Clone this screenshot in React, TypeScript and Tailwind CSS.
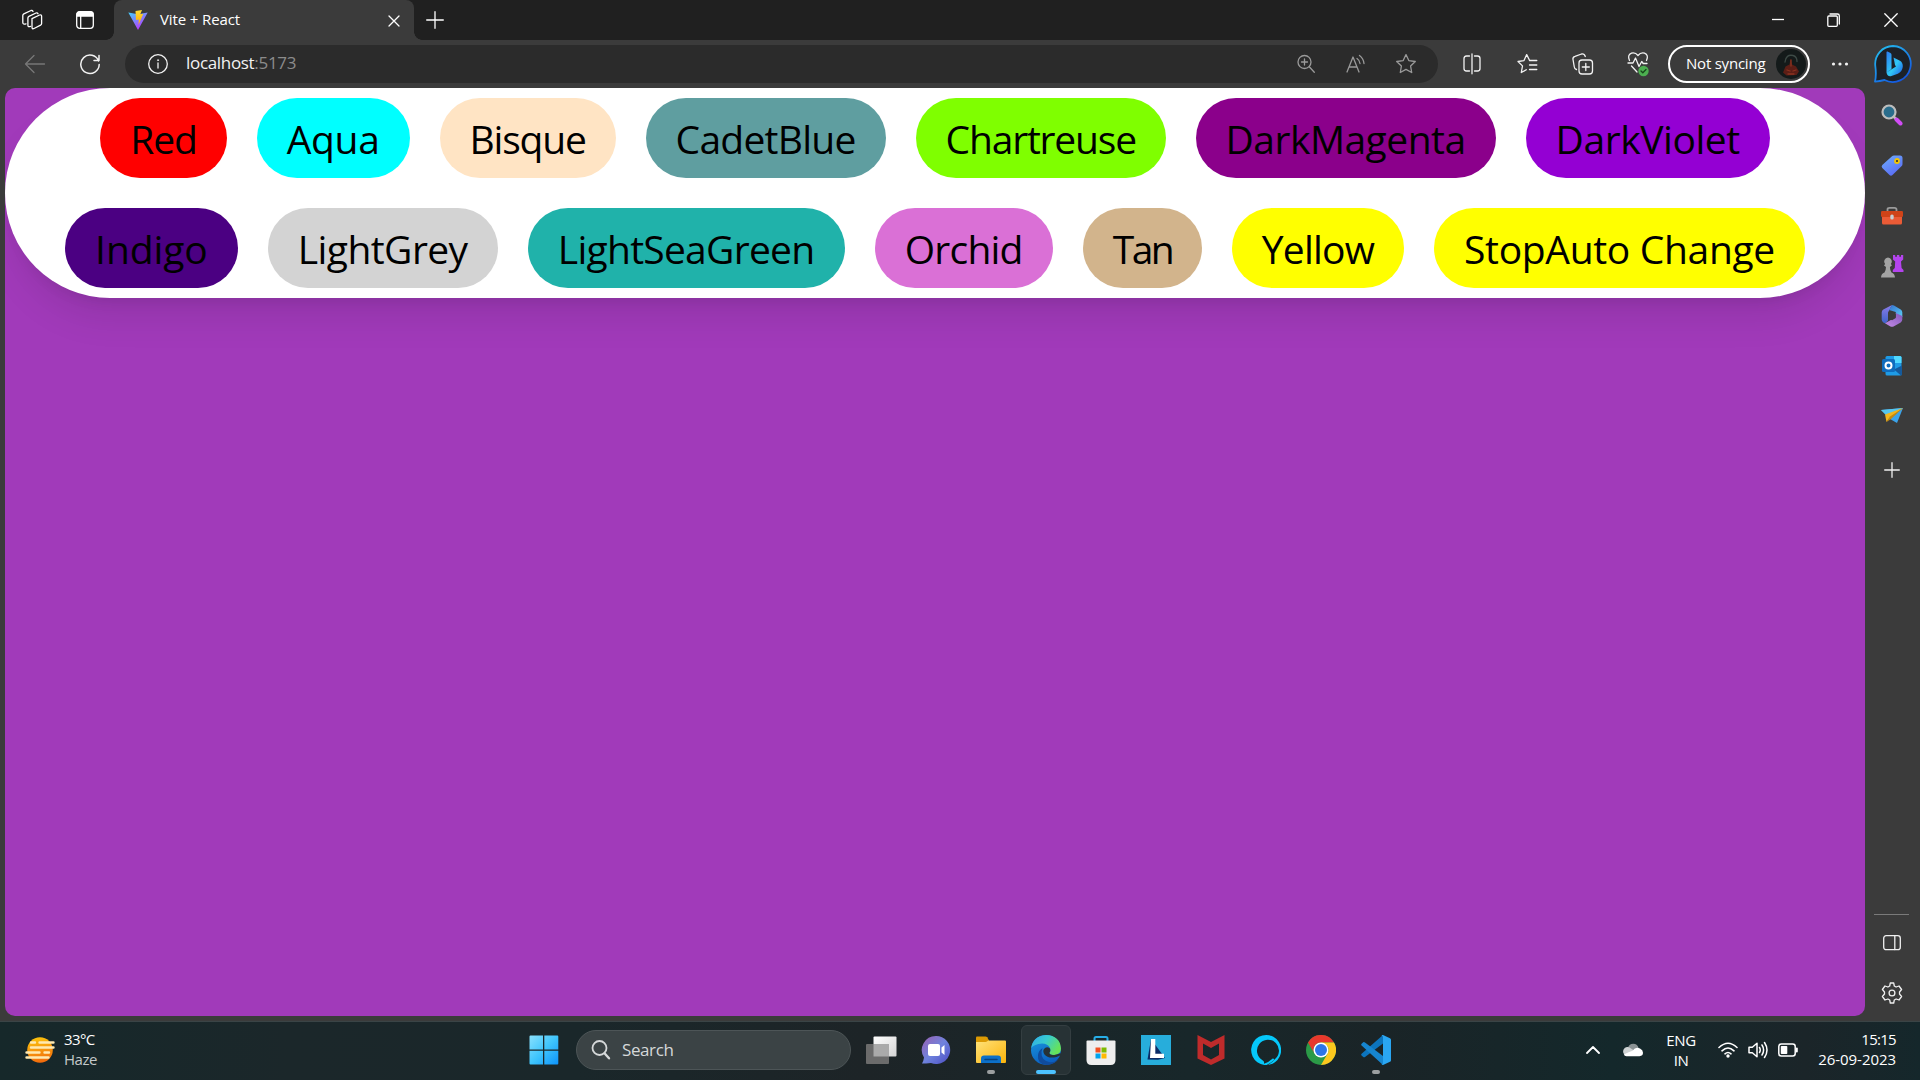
import React from "react";

type Swatch = { name: string; className: string };

const swatches: Swatch[] = [
  { name: "Red", className: "w-[126.6px] bg-[red] tracking-[-1.13px]" },
  { name: "Aqua", className: "w-[152.8px] bg-[aqua] tracking-[-0.35px]" },
  { name: "Bisque", className: "w-[176px] bg-[bisque] tracking-[-1.2px]" },
  { name: "CadetBlue", className: "w-[240px] bg-[cadetblue] tracking-[-0.75px]" },
  { name: "Chartreuse", className: "w-[250px] bg-[chartreuse] tracking-[-1.2px]" },
  { name: "DarkMagenta", className: "w-[300px] bg-[darkmagenta] tracking-[-0.52px]" },
  { name: "DarkViolet", className: "w-[244.2px] bg-[darkviolet] tracking-[-0.45px]" },
  { name: "Indigo", className: "w-[172.7px] bg-[indigo] tracking-[-0.08px]" },
  { name: "LightGrey", className: "w-[230px] bg-[lightgrey] tracking-[-0.57px]" },
  { name: "LightSeaGreen", className: "w-[317px] bg-[lightseagreen] tracking-[-0.73px]" },
  { name: "Orchid", className: "w-[178px] bg-[orchid] tracking-[-0.77px]" },
  { name: "Tan", className: "w-[119.1px] bg-[tan] tracking-[-2.6px]" },
  { name: "Yellow", className: "w-[172.2px] bg-[yellow] tracking-[-0.8px]" },
  { name: "StopAuto Change", className: "w-[370.9px] bg-[yellow] tracking-[-0.33px]" },
];

function Slot({ className = "", children }: { className?: string; children: React.ReactNode }) {
  return <div className={`flex shrink-0 items-center justify-center ${className}`}>{children}</div>;
}

function Svg({ w, h, box, children, className = "" }: { w: number; h: number; box?: string; children: React.ReactNode; className?: string }) {
  return (
    <svg
      width={w}
      height={h}
      viewBox={box ?? `0 0 ${w} ${h}`}
      fill="none"
      stroke="currentColor"
      strokeWidth="1.3"
      strokeLinecap="round"
      strokeLinejoin="round"
      className={`block shrink-0 ${className}`}
    >
      {children}
    </svg>
  );
}

function TabStrip() {
  return (
    <header className="flex h-10 bg-[#202020] text-white">
      <Slot className="w-[64px]">
        <Svg w={22} h={22}>
          <path d="M11 9.600 18.600 6q2-.7 2 1.200v7.200q0 1.200-1 1.700l-6.600 3.400q-2 .8-2-1.200z" />
          <path d="M9.500 17.400q-2.600 1-2.600-1.200V9q0-1.200 1-1.700L15 4q1.500-.5 2 .8" />
          <path d="M5 14.800q-3.200 1-3.200-1.200V6.600q0-1.200 1-1.700L10 1.500q1.500-.4 2 .9" />
        </Svg>
      </Slot>
      <Slot className="ml-[11px] w-5">
        <Svg w={20} h={20}>
          <rect x="1.700" y="1.700" width="16.600" height="16.600" rx="3" />
          <path d="M2 6V4.500Q2 2 4.500 2h11Q18 2 18 4.500V6z" fill="currentColor" />
          <path d="M5.700 6v12" />
        </Svg>
      </Slot>
      <div className="relative ml-[19px] flex h-10 w-[300px] items-center rounded-t-lg bg-[#3b3b3b]">
        <Svg w={20} h={20} className="ml-[14px]">
          <defs>
            <linearGradient id="viteBody" x1="0" y1="0" x2=".6" y2="1">
              <stop offset="0" stopColor="#41d1ff" />
              <stop offset="1" stopColor="#bd34fe" />
            </linearGradient>
            <linearGradient id="viteBolt" x1="0" y1="0" x2="0" y2="1">
              <stop offset="0" stopColor="#ffdd35" />
              <stop offset="1" stopColor="#ffa800" />
            </linearGradient>
          </defs>
          <path d="M.3 2.400 10 20 19.700 2.400 10 4.200z" fill="url(#viteBody)" stroke="none" />
          <path d="M7.500.9 14 0l-1.700 4.200 3-.5-4.800 11.200.3-5.400-2.800.6z" fill="url(#viteBolt)" stroke="none" />
        </Svg>
        <span className="mb-[2px] ml-3 whitespace-nowrap text-[15px] leading-5 tracking-[-0.12px]">Vite + React</span>
        <Svg w={12} h={12} className="mt-px ml-auto mr-[14px]">
          <path d="M1 1l10 10M11 1 1 11" />
        </Svg>
        <span className="absolute -left-2 bottom-0 size-2 bg-[radial-gradient(circle_at_0_0,#202020_7.5px,#3b3b3b_8px)]" />
        <span className="absolute -right-2 bottom-0 size-2 bg-[radial-gradient(circle_at_100%_0,#202020_7.5px,#3b3b3b_8px)]" />
      </div>
      <Slot className="ml-3 w-[18px]">
        <Svg w={18} h={18}>
          <path d="M9 .7v16.600M.7 9h16.600" />
        </Svg>
      </Slot>
      <div className="ml-auto flex">
        <Slot className="w-[57px]">
          <Svg w={12} h={12}><path d="M0 5.500h12" strokeLinecap="butt" /></Svg>
        </Slot>
        <Slot className="w-14">
          <Svg w={14} h={14}>
            <rect x=".8" y="3" width="9.500" height="10.300" rx="1" />
            <path d="M3 1h7.500q1.800 0 1.800 1.800V11" />
          </Svg>
        </Slot>
        <Slot className="w-[58px]">
          <Svg w={14} h={14}><path d="M.8.8l12.400 12.400M13.200.8.8 13.200" /></Svg>
        </Slot>
      </div>
    </header>
  );
}

function AddressBar() {
  return (
    <div className="flex h-[38px] w-[1313px] shrink-0 items-center rounded-full bg-[#2b2b2b]">
      <Svg w={22} h={22} className="ml-[22px]">
        <circle cx="11" cy="11" r="9.300" />
        <path d="M11 10v5" />
        <circle cx="11" cy="7.200" r=".6" fill="currentColor" strokeWidth=".6" />
      </Svg>
      <span className="mb-px ml-[17px] whitespace-nowrap text-[17px] leading-6 tracking-[-0.32px]">
        localhost<span className="text-[#8b8b8b]">:5173</span>
      </span>
      <div className="ml-auto mr-[7px] flex text-[#9a9a9a]">
        <Slot className="w-[50px]">
          <Svg w={20} h={20}>
            <circle cx="8.500" cy="8" r="6.500" />
            <path d="M8.500 5v6M5.500 8h6M13.300 12.800l5 5.500" />
          </Svg>
        </Slot>
        <Slot className="w-[50px]">
          <Svg w={22} h={20}>
            <path d="M2 18 8 3l6 15M4.200 13h7.600M12 4.500q2.500 1.600 3 5M14.500 1.500q4 3 4.500 8" />
          </Svg>
        </Slot>
        <Slot className="w-[50px]">
          <Svg w={22} h={22}>
            <path d="M11 1.600l2.800 6 6.500.9-4.700 4.500 1.100 6.500-5.700-3.100-5.700 3.100 1.100-6.500L1.700 8.500l6.500-.9z" />
          </Svg>
        </Slot>
      </div>
    </div>
  );
}

function Toolbar() {
  return (
    <div className="flex h-12 items-center bg-[#3b3b3b] pb-px text-[#f2f2f2]">
      <Slot className="ml-6 w-[22px] text-[#777]">
        <Svg w={22} h={20}><path d="M20.500 10h-19M10 1.500 1.500 10l8.500 8.500" /></Svg>
      </Slot>
      <Slot className="ml-[33px] w-[22px]">
        <Svg w={22} h={22} className="[stroke-width:1.5]">
          <path d="M19.600 8A9.200 9.200 0 1 0 20.200 11.500M20 2.500V7.600h-5" />
        </Svg>
      </Slot>
      <div className="ml-6"><AddressBar /></div>
      <Slot className="ml-[6px] w-14">
        <Svg w={20} h={22}>
          <path d="M7.500 3H4.500Q2 3 2 5.500v10Q2 18 4.500 18h3M12.500 3h3Q18 3 18 5.500v10q0 2.500-2.500 2.500h-3M10 .8v20" />
        </Svg>
      </Slot>
      <Slot className="w-14">
        <Svg w={22} h={22}>
          <path d="M12.500 7.300 9.700 1.600 7 7.600l-6 .9 4.500 4.400-1.200 6.600 5-2.700M12.500 7.500h7.300M12.500 12h7.300M12.500 16.500h7.300" />
        </Svg>
      </Slot>
      <Slot className="w-[54px]">
        <Svg w={24} h={24}>
          <rect x="8" y="8" width="13.500" height="14" rx="3" />
          <path d="M14.800 11.500v7M11.300 15h7M5.500 17.500Q3.500 17 3.300 15L2 7.500Q1.500 5 4 4.300L10.500 2q2.800-.6 3.800 2.500" />
        </Svg>
      </Slot>
      <Slot className="w-14">
        <Svg w={24} h={26}>
          <path d="M3.500 9.500Q1 4 5.500 2.200 9.300 1.200 12 4.500 14.700 1.200 18.500 2.200 23 4 20.500 9.500M2 12h5l2.500-5 3.500 8.500 2.700-5 1.500 2H21M5.500 15l5.500 6" />
          <circle cx="17.500" cy="20" r="5.200" fill="#4caf50" stroke="none" />
          <path d="M15 20l1.800 1.800 3.200-3.300" stroke="#17451a" />
        </Svg>
      </Slot>
      <div className="ml-[2px] flex h-[38px] w-[142px] shrink-0 items-center rounded-full border-2 border-white text-white">
        <span className="mb-px ml-[16px] w-[80px] whitespace-nowrap text-[15px] leading-5 tracking-[-0.22px]">Not syncing</span>
        <Svg w={30} h={30} className="ml-[10px]">
          <circle cx="15" cy="15" r="15" fill="#141a1a" stroke="none" />
          <path d="M9 13q1-8 8-6.500 4 1 4 6" stroke="#3d4a46" />
          <path d="M14.500 10l1.500 5.500 4 2 3 5-2.500 3.500-10 .5-3.500-3 2.500-6 4-2z" fill="#5c1e16" stroke="none" />
          <path d="M15 11v6M11 21l3 1M17 22l3-1M12 25h6" stroke="#8c3320" />
        </Svg>
      </div>
      <Slot className="ml-5 w-5">
        <Svg w={18} h={6}>
          <g fill="currentColor" stroke="none"><circle cx="2.500" cy="3" r="1.600" /><circle cx="9" cy="3" r="1.600" /><circle cx="15.500" cy="3" r="1.600" /></g>
        </Svg>
      </Slot>
      <Slot className="ml-[24px] w-[38px]">
        <Svg w={38} h={38}>
          <defs>
            <linearGradient id="bingRing" x1="0" y1="0" x2=".7" y2="1">
              <stop offset="0" stopColor="#25c5f0" /><stop offset="1" stopColor="#1456e0" />
            </linearGradient>
            <linearGradient id="bingB" x1="0" y1="0" x2="1" y2="1">
              <stop offset="0" stopColor="#2b7bf2" /><stop offset=".55" stopColor="#30c8f5" /><stop offset="1" stopColor="#1d57e8" />
            </linearGradient>
          </defs>
          <path d="M19 1a18 18 0 1 1-8.500 34Q6 36 1 36.700 2.500 30 1.300 21A18 18 0 0 1 19 1z" fill="#1c2128" stroke="url(#bingRing)" strokeWidth="1.800" />
          <path d="M12.500 7.200q0-1 1-.7l3 1.500q1 .6 1 1.800V24l-5 3.500zM19.500 12.500l6.500 3.200q3 1.800 2.800 6-.6 4.800-5 7L17.500 31q-4.300 1-5-3.500l9.500-6-1-1.500z" fill="url(#bingB)" stroke="none" />
        </Svg>
      </Slot>
    </div>
  );
}

function Sidebar() {
  return (
    <aside className="flex w-[55px] shrink-0 flex-col items-center bg-[#3b3b3b] pt-px pr-[2px] text-[#f0f0f0]">
      <Slot className="h-[51px]">
        <Svg w={22} h={22}>
          <circle cx="8" cy="8" r="6.500" fill="#2a6d8c" stroke="#bdbdbd" strokeWidth="2.200" />
          <path d="M13 13l2 2" stroke="#bdbdbd" strokeWidth="2.500" />
          <path d="M15.500 15.500l4 4" stroke="#d14cf5" strokeWidth="4" />
        </Svg>
      </Slot>
      <Slot className="h-[51px]">
        <Svg w={22} h={22}>
          <defs><linearGradient id="tag" x1="0" y1="0" x2=".6" y2="1"><stop stopColor="#6fb0fb" /><stop offset="1" stopColor="#5a6cf5" /></linearGradient></defs>
          <path d="M11 1.200q.8-.7 2-.7h6q2.500 0 2.500 2.500v6q0 1.300-.8 2L11.500 20q-1.500 1.400-3 0L1.300 13q-1.300-1.400 0-3z" fill="url(#tag)" stroke="none" />
          <circle cx="16" cy="6" r="2" stroke="#f4c500" strokeWidth="1.800" fill="#333" />
        </Svg>
      </Slot>
      <Slot className="h-[50px]">
        <Svg w={24} h={20}>
          <path d="M7.500 6V3.500Q7.500 1.800 9.500 1.800h5q2 0 2 1.700V6" stroke="#9b9b9b" strokeWidth="1.800" />
          <rect x="2" y="9" width="20" height="9.500" rx="1.500" fill="#ea5b36" stroke="none" />
          <rect x="1" y="5" width="22" height="6" rx="1.200" fill="#cf4318" stroke="none" />
          <rect x="10.300" y="8.500" width="3.400" height="5" rx="1.600" fill="#c6cfd3" stroke="none" />
        </Svg>
      </Slot>
      <Slot className="h-[50px]">
        <Svg w={24} h={24}>
          <path d="M13 1h2.200v1.800h1.700V1h2.400v1.800H21V1h2.200v4.500L21 7.500l.6 6.500 1.900 2V18H12.800v-2l2-2 .4-6.500L13 5.500z" fill="#b444ee" stroke="none" />
          <path d="M8 3.500a4 4 0 0 1 2.900 6.600l1 1.400-2 1.500q.2 3.600 1.600 5.500 3.200 1 3.500 5H1q.2-4 3.500-5Q5.900 16.600 6 13l-2-1.500 1.100-1.400A4 4 0 0 1 8 3.500z" fill="#a3a3a3" stroke="none" />
        </Svg>
      </Slot>
      <Slot className="h-[50px]">
        <Svg w={22} h={22}>
          <defs>
            <linearGradient id="m1" x1="0" y1="0" x2="0" y2="1"><stop stopColor="#8b7be8" /><stop offset="1" stopColor="#3d63c9" /></linearGradient>
            <linearGradient id="m2" x1="0" y1="0" x2="1" y2="1"><stop stopColor="#336fce" /><stop offset="1" stopColor="#5cd0f8" /></linearGradient>
            <linearGradient id="m3" x1="0" y1="1" x2="1" y2="0"><stop stopColor="#c58be6" /><stop offset="1" stopColor="#8258bc" /></linearGradient>
          </defs>
          <path d="M11 0 2.300 4.600Q.7 5.600.7 7.400v7.200q0 1.800 1.600 2.800l2 1L7 15.500V7.500z" fill="url(#m1)" stroke="none" />
          <path d="M11 0q1 0 2 .5l6.700 4q1.600 1 1.600 2.800v5l-6.500-3.500V7L8 5z" fill="url(#m2)" stroke="none" />
          <path d="M21.300 11v3.600q0 1.800-1.600 2.800L13 21.300q-2 1-4 0l-5-3 10.700-6V8z" fill="url(#m3)" stroke="none" />
          <path d="M11 6.800l3.800 2.200v4L11 15.200 7.200 13V9z" fill="#3b3b3b" stroke="none" />
        </Svg>
      </Slot>
      <Slot className="h-[50px]">
        <Svg w={22} h={22}>
          <rect x="4.500" y="1" width="16" height="19.500" rx="1.500" fill="#1e9be6" stroke="none" />
          <path d="M13 1h6q1.500 0 1.500 1.500V8H13z" fill="#50d9ff" stroke="none" />
          <path d="M21 10.500v9q0 1-1 1l-7-6z" fill="#155a9c" stroke="none" />
          <rect x="1" y="4" width="13" height="13" rx="1.500" fill="#0f6cbd" stroke="none" />
          <circle cx="7.500" cy="10.500" r="3" stroke="white" strokeWidth="2" />
        </Svg>
      </Slot>
      <Slot className="h-[50px]">
        <Svg w={22} h={18}>
          <path d="M0 3 22 1l-6 15-7-4z" fill="#3ba3ea" stroke="none" />
          <path d="M0 3 22 1 5 8z" fill="#56c5ee" stroke="none" />
          <path d="M22 1 4 7.500 5.500 15l3-4z" fill="#f2b51d" stroke="none" />
          <path d="M22 1 9 9.500 5.500 15 10 12z" fill="#c28912" stroke="none" />
        </Svg>
      </Slot>
      <Slot className="h-[58px]">
        <Svg w={16} h={16}><path d="M8 .7v14.600M.7 8h14.600" /></Svg>
      </Slot>
      <div className="mt-auto h-px w-[35px] bg-[#7a7a7a]" />
      <Slot className="h-[55px]">
        <Svg w={20} h={18}>
          <rect x="1.700" y="1.700" width="16.600" height="14" rx="2.500" />
          <path d="M12.800 2v13.500" />
        </Svg>
      </Slot>
      <Slot className="mb-[6px] h-[45px]">
        <Svg w={22} h={22}>
          <path d="M9.300 1h3.400l.6 3 1.800 1 2.900-1 2.600 3.500L18.500 10v2l2.100 2.500L18 18l-2.900-1-1.800 1-.6 3H9.300l-.6-3-1.800-1L4 18l-2.600-3.500L3.500 12v-2L1.400 7.500 4 4l2.900 1 1.800-1z" />
          <circle cx="11" cy="11" r="2.900" />
        </Svg>
      </Slot>
    </aside>
  );
}

function Page() {
  return (
    <main className="ml-[5px] mb-[5px] flex-1 overflow-hidden rounded-[10px] bg-[#a13aba]">
      <div className="flex h-[210px] flex-wrap content-start justify-center gap-[30px] rounded-full bg-white pt-[10px] shadow-[0_25px_37.5px_-7.5px_rgba(0,0,0,0.1),0_10px_15px_-10px_rgba(0,0,0,0.1)]">
        {swatches.map((s) => (
          <button
            key={s.name}
            className={`h-20 shrink-0 whitespace-nowrap rounded-full px-[30px] pt-px text-left text-[39px] leading-[60px] text-black ${s.className}`}
          >
            {s.name}
          </button>
        ))}
      </div>
    </main>
  );
}

function Taskbar() {
  return (
    <footer className="flex h-[59px] items-center border-t border-[#3a4446] bg-[linear-gradient(90deg,#16282a_0%,#1b272a_15%,#1a272a_30%,#1d2427_45%,#18272a_62%,#1a2427_72%,#14282b_84%,#1b2529_94%,#15272b_100%)] pb-[2px] text-white">
      <Svg w={30} h={26} className="ml-[25px]">
        <defs><linearGradient id="sun" x1=".3" y1="0" x2=".5" y2="1"><stop stopColor="#fbc40c" /><stop offset="1" stopColor="#f26a0c" /></linearGradient></defs>
        <circle cx="15" cy="13" r="12.800" fill="url(#sun)" stroke="none" />
        <g stroke="#ffe9b0" strokeWidth="2.400"><path d="M6 5.500h4M14.500 5.500h14M6 10.500h22.500M1.500 15.500h13M19.500 15.500h4.500M1.500 20.500h22" /></g>
      </Svg>
      <div className="mb-[2px] ml-[9px] w-[40px] whitespace-nowrap text-[15px] leading-5 tracking-[-0.6px]">
        <div>33°C</div>
        <div className="text-[#c4c9ca] tracking-[-0.5px]">Haze</div>
      </div>
      <Svg w={30} h={30} className="ml-[425px]">
        <defs><linearGradient id="win" x1="0" y1="0" x2="1" y2="1"><stop stopColor="#8ae0fc" /><stop offset=".5" stopColor="#3fc5fc" /><stop offset="1" stopColor="#0d93fb" /></linearGradient></defs>
        <path d="M1.500.5H14v14H.5v-13q0-1 1-1zM15.300.5h13q1 0 1 1v13h-14zM.5 15.800H14v13.700H1.500q-1 0-1-1zM15.300 15.800h14v12.700q0 1-1 1h-13z" fill="url(#win)" stroke="none" />
      </Svg>
      <div className="ml-[17px] flex h-10 w-[275px] shrink-0 items-center rounded-full border border-[#4d5557] bg-[#3b4345] text-[#d5d8d9]">
        <Svg w={20} h={20} className="ml-[14px]">
          <circle cx="8.500" cy="8" r="7" strokeWidth="1.800" />
          <path d="M13.500 13.300l4.500 5" strokeWidth="2.400" />
        </Svg>
        <span className="ml-[11px] text-[17px] leading-6 tracking-[-0.4px]">Search</span>
      </div>
      <div className="ml-[2px] flex h-full items-center">
        <Slot className="w-[55px]">
          <Svg w={32} h={30}>
            <defs><linearGradient id="tv" x1="0" y1="0" x2="1" y2="1"><stop stopColor="#fff" /><stop offset="1" stopColor="#d4d4d4" /></linearGradient></defs>
            <rect x="8.500" y="1.500" width="23" height="20" rx="1" fill="url(#tv)" stroke="none" />
            <rect x="1" y="9" width="23" height="20" rx="1" fill="#6b6b6b" stroke="none" />
            <path d="M8.500 9H24v12.500H8.500z" fill="#aaa" stroke="none" />
          </Svg>
        </Slot>
        <Slot className="w-[55px]">
          <Svg w={30} h={30}>
            <defs><linearGradient id="chat" x1="0" y1="0" x2="1" y2="1"><stop stopColor="#9a5fb0" /><stop offset=".5" stopColor="#6f83dd" /><stop offset="1" stopColor="#4b4cc4" /></linearGradient></defs>
            <path d="M15 1a14 14 0 1 1-5 27Q5 28.500 1 28.500 2.500 26 3 22.500A14 14 0 0 1 15 1z" fill="url(#chat)" stroke="none" />
            <rect x="7" y="9" width="12" height="12" rx="2" fill="white" stroke="none" />
            <path d="M20.500 12.500 23.500 10v10l-3-2.500z" fill="white" stroke="none" />
          </Svg>
        </Slot>
        <Slot className="relative w-[55px] self-stretch">
          <Svg w={30} h={28}>
            <defs><linearGradient id="fold" x1="0" y1="0" x2="1" y2="1"><stop stopColor="#ffe27a" /><stop offset="1" stopColor="#fbb40a" /></linearGradient></defs>
            <path d="M0 1.500Q0 .5 1 .5h8.500q1 0 1.700.8L13 4.500V10H0z" fill="#dc9a03" stroke="none" />
            <path d="M0 6h9.500q1 0 1.800-.8l1-.8H29q1 0 1 1V26q0 1-1 1H1q-1 0-1-1z" fill="url(#fold)" stroke="none" />
            <path d="M5 27v-4.500Q5 19.500 8 19.500h14q3 0 3 3V27z" fill="#0c70c8" stroke="none" />
            <path d="M9 23.500h12" stroke="#07427e" strokeWidth="1.500" />
          </Svg>
          <span className="absolute bottom-[4px] left-1/2 h-1 w-2 -translate-x-1/2 rounded-full bg-[#9b9fa0]" />
        </Slot>
        <div className="relative mx-[2.5px] flex size-[50px] items-center justify-center rounded-md border border-[#343e41] bg-[#273235]">
          <Svg w={30} h={30}>
            <defs>
              <linearGradient id="e1" x1="0" y1="0" x2="1" y2=".5"><stop stopColor="#2fa8ec" /><stop offset=".5" stopColor="#38cbd0" /><stop offset="1" stopColor="#66e25a" /></linearGradient>
              <linearGradient id="e2" x1="0" y1="0" x2=".4" y2="1"><stop stopColor="#1b9de2" /><stop offset="1" stopColor="#0b5fc0" /></linearGradient>
            </defs>
            <circle cx="15" cy="15" r="15" fill="url(#e2)" stroke="none" />
            <path d="M10.500 17Q10 25 18 27q6 1 10-3.500Q23.500 30 15.500 30 6 29 7 20q.5-4.500 4.500-7z" fill="#104b9c" stroke="none" />
            <path d="M.2 13Q2 1 15 0q14 .5 15 13.500Q30 20 23 20q-5 0-4.500-2.500Q20 16 19 13q-2-4.500-8-4.500Q3 9 .2 13z" fill="url(#e1)" stroke="none" />
            <path d="M19 13.500q-3.500-2.500-6 .5-1.600 2.400.5 5.500 3.500 4.500 12 2.500l3-1.300q1.500-.5.5 1.300L31 24V18l-7.500 2q-5.500 0-5-2.500 1.300-1.700.5-4z" fill="#273235" stroke="none" />
          </Svg>
          <span className="absolute bottom-0 left-1/2 h-1 w-5 -translate-x-1/2 rounded-full bg-[#4cc2ff]" />
        </div>
        <Slot className="w-[55px]">
          <Svg w={30} h={30}>
            <path d="M8.500 7V3.500q0-1.500 1.500-1.500h10q1.500 0 1.500 1.500V7" stroke="#27aee8" strokeWidth="2" />
            <path d="M.5 6.500q0-1 1-1h27q1 0 1 1V25q0 5-5 5h-19q-5 0-5-5z" fill="#eee" stroke="none" />
            <g stroke="none"><path d="M9.500 12.500h5v5h-5z" fill="#f25022" /><path d="M15.500 12.500h5v5h-5z" fill="#7fba00" /><path d="M9.500 18.500h5v5h-5z" fill="#00a4ef" /><path d="M15.500 18.500h5v5h-5z" fill="#ffb900" /></g>
          </Svg>
        </Slot>
        <Slot className="w-[55px]">
          <Svg w={30} h={30}>
            <path d="M0 0h30v30H0z" fill="#27addb" stroke="none" />
            <path d="M10 4 6.500 24.500l10.500.3L24 23z" fill="#0b2b66" stroke="none" />
            <path d="M10 4h4.300v14.800H23V23H9z" fill="white" stroke="none" />
          </Svg>
        </Slot>
        <Slot className="w-[55px]">
          <Svg w={28} h={30}>
            <path d="M.5 0 14 7 27.500 0v23.500L14 30 .5 23.500zM6 8.500v11.500l8 4.500 8-4.500V8.500L14 13z" fill="#bf2b2b" fillRule="evenodd" stroke="none" />
          </Svg>
        </Slot>
        <Slot className="w-[55px]">
          <Svg w={30} h={30}>
            <path d="M13.300 29.900A15 15 0 1 1 17 29.900Q21 27.500 23.500 24.500A11 11 0 1 0 11.500 25.200Q13.500 26 13.300 29.900z" fill="#05c8fa" stroke="none" />
            <path d="M14 29.500q4.500-1.500 8-5" stroke="#05c8fa" strokeWidth="2" />
          </Svg>
        </Slot>
        <Slot className="w-[55px]">
          <Svg w={30} h={30} box="0 0 48 48">
            <g stroke="none">
              <circle cx="24" cy="24" r="24" fill="#2b9a47" />
              <path d="M3.200 12A24 24 0 0 1 44.800 12H24a12 12 0 0 0-10.400 18z" fill="#e8382c" />
              <path d="M44.800 12A24 24 0 0 1 24 48l10.400-18A12 12 0 0 0 34.400 18L24 12z" fill="#fcc81e" />
              <circle cx="24" cy="24" r="12" fill="white" />
              <circle cx="24" cy="24" r="9.600" fill="#2d76e8" />
            </g>
          </Svg>
        </Slot>
        <Slot className="relative w-[55px] self-stretch">
          <Svg w={30} h={30}>
            <g stroke="none">
              <path d="M22 0v8.500L4 22q-1 .7-1.800 0L.6 20.600q-.9-1 0-1.900z" fill="#0c74bd" />
              <path d="M.6 8.700 2.200 7.300Q3 6.800 4 7.500L22 21v9L.6 10.600q-.9-1 0-1.900z" fill="#1685cf" />
              <path d="M22 0l7 3.200q1 .5 1 1.500v20.600q0 1-1 1.500L22 30q-1 .3-1.500-.5 1.500.4 1.500-1.500V2Q22 .5 20.500.5 21.200-.3 22 0z" fill="#2aa6f2" />
            </g>
          </Svg>
          <span className="absolute bottom-[4px] left-1/2 h-1 w-2 -translate-x-1/2 rounded-full bg-[#9b9fa0]" />
        </Slot>
      </div>
      <div className="ml-auto flex items-center">
        <Slot className="w-[40px]">
          <Svg w={14} h={8} className="[stroke-width:1.8]"><path d="M1 7l6-6 6 6" /></Svg>
        </Slot>
        <Slot className="w-[40px]">
          <Svg w={20} h={14}>
            <g stroke="none"><path d="M5 4.500a5.500 5.500 0 0 1 10.500 0L12 9z" fill="#8b9294" /><path d="M4.500 13A4.500 4.500 0 1 1 8 5.500l6 4z" fill="#cfd3d4" /><path d="M3.500 13.200Q1.500 13 .8 11.500 6 9 9.500 7.700 13 3 17 5.500q3 1.500 3 4.300 0 3.200-3.500 3.400z" fill="white" /></g>
          </Svg>
        </Slot>
        <div className="w-[56px] text-center text-[15px] leading-5 tracking-[-0.4px]"><div>ENG</div><div>IN</div></div>
        <Slot className="ml-[6px] w-[26px]">
          <Svg w={20} h={16} className="[stroke-width:1.6]">
            <path d="M1 5.500q9-8.500 18 0M4 8.800q6-5.600 12 0M7 11.800q3-2.600 6 0" />
            <circle cx="10" cy="14" r="1.700" fill="currentColor" stroke="none" />
          </Svg>
        </Slot>
        <Slot className="ml-[5px] w-[24px]">
          <Svg w={20} h={18} className="[stroke-width:1.5]">
            <path d="M1 6.300h3.300L9 2.300v13.400l-4.700-4H1zM11.500 6.500q1.500 2.500 0 5M14 4q3.200 5 0 10M16.500 1.500q5 7.500 0 15" />
          </Svg>
        </Slot>
        <Slot className="ml-[7px] w-[22px]">
          <Svg w={20} h={14}>
            <rect x=".8" y="1" width="16.400" height="12" rx="2.500" strokeWidth="1.500" />
            <rect x="2.800" y="3" width="6.500" height="8" rx=".8" fill="currentColor" stroke="none" />
            <path d="M18.800 5.500v3" strokeWidth="2" />
          </Svg>
        </Slot>
        <div className="mb-[2px] ml-[17px] mr-[24px] w-[80px] whitespace-nowrap text-right text-[15px] leading-5"><div className="tracking-[-0.7px]">15:15</div><div className="tracking-[-0.05px]">26-09-2023</div></div>
      </div>
    </footer>
  );
}

export default function App() {
  return (
    <div className="flex h-[1080px] w-[1920px] flex-col overflow-hidden bg-[#3b3b3b] font-['Open_Sans','Noto_Sans',sans-serif]">
      <TabStrip />
      <Toolbar />
      <div className="flex min-h-0 flex-1">
        <Page />
        <Sidebar />
      </div>
      <Taskbar />
    </div>
  );
}
